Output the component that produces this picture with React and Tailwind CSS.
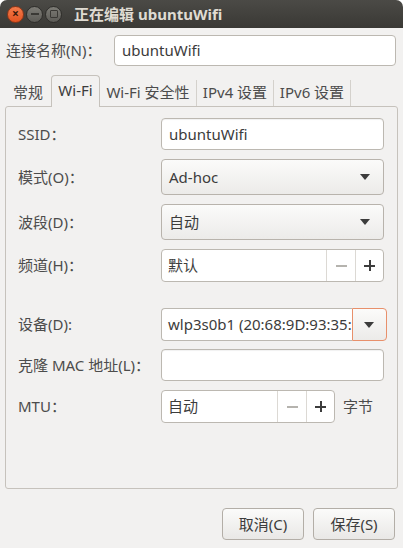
import React from 'react';

const font = { fontFamily: '"Noto Sans", "Noto Sans CJK SC", sans-serif' };

function Arrow() {
  return (
    <svg width="10" height="6" viewBox="0 0 10 6" className="shrink-0">
      <path d="M0 0 L10 0 L5 6 Z" fill="#3c3c3c" />
    </svg>
  );
}

function Entry({ value, h = 'h-[32px]' }) {
  return (
    <div className={`${h} w-full bg-white border border-[#bcb8b1] rounded-[4px] flex items-center px-[7px] text-[#3c3c3c] shadow-[inset_0_1px_1px_rgba(0,0,0,0.06)]`}>
      {value}
    </div>
  );
}

function Combo({ value }) {
  return (
    <div className="h-[36px] w-full bg-gradient-to-b from-[#fbfbfa] to-[#ecebe9] border border-[#b8b3ac] rounded-[4px] flex items-center justify-between pl-[7px] pr-[13px] text-[#3c3c3c]">
      <span>{value}</span>
      <Arrow />
    </div>
  );
}

function Spin({ value, w = 'w-full' }) {
  return (
    <div className={`h-[33px] ${w} bg-white border border-[#bcb8b1] rounded-[4px] flex items-stretch text-[#3c3c3c] overflow-hidden`}>
      <div className="flex-1 flex items-center px-[6px]">{value}</div>
      <div className="w-[29px] border-l border-[#dcd9d4] flex items-center justify-center">
        <div className="w-[11px] h-[2px] bg-[#b5b3ae]" />
      </div>
      <div className="w-[28px] border-l border-[#dcd9d4] flex items-center justify-center relative">
        <div className="w-[11px] h-[2px] bg-[#3c3c3c]" />
        <div className="absolute w-[2px] h-[11px] bg-[#3c3c3c]" />
      </div>
    </div>
  );
}

function Row({ label, children, className = '' }) {
  return (
    <div className={`flex items-center ${className}`}>
      <div className="w-[143px] shrink-0 text-[#4c4c4c]">{label}</div>
      <div className="flex-1 flex items-center">{children}</div>
    </div>
  );
}

const tabs = [
  { t: '常规', w: 'w-[46px]' },
  { t: 'Wi-Fi', w: 'w-[49px]' },
  { t: 'Wi-Fi 安全性', w: 'w-[97px]' },
  { t: 'IPv4 设置', w: 'w-[77px]' },
  { t: 'IPv6 设置', w: 'w-[77px]' },
];

export default function App() {
  return (
    <div className="w-[403px] h-[548px] bg-[#f2f1f0] flex flex-col overflow-hidden text-[15px] rounded-t-[7px]" style={font}>
      <div className="h-[28px] shrink-0 bg-gradient-to-b from-[#4b4a46] to-[#3a3935] flex items-center pl-[7px]">
        <div className="w-[17px] h-[17px] rounded-full bg-gradient-to-b from-[#f37a4a] to-[#e3531f] border border-[#8f3718] flex items-center justify-center text-[#3b1a0c] text-[12px] font-bold leading-none">×</div>
        <div className="ml-[2px] w-[17px] h-[17px] rounded-full bg-gradient-to-b from-[#7d7c76] to-[#5c5b56] border border-[#2f2e2b] flex items-center justify-center">
          <div className="w-[8px] h-[2px] bg-[#3a3935]" />
        </div>
        <div className="ml-[2px] w-[17px] h-[17px] rounded-full bg-gradient-to-b from-[#7d7c76] to-[#5c5b56] border border-[#2f2e2b] flex items-center justify-center">
          <div className="w-[8px] h-[8px] border-[1.5px] border-[#3a3935] rounded-[1px]" />
        </div>
        <span className="ml-[12px] text-[#dfdbd2] font-bold">正在编辑 ubuntuWifi</span>
      </div>

      <div className="flex-1 flex flex-col px-[5px] pt-[7px]">
        <div className="flex items-center h-[31px]">
          <div className="w-[109px] pl-[1px] text-[#4c4c4c]">连接名称(N)：</div>
          <div className="flex-1 pr-[2px]">
            <div className="h-[31px] bg-white border border-[#bcb8b1] rounded-[4px] flex items-center px-[7px] text-[#3c3c3c]">ubuntuWifi</div>
          </div>
        </div>

        <div className="mt-[9px] h-[31px] flex items-end relative z-10">
          {tabs.map((tab, i) =>
            i === 1 ? (
              <div key={tab.t} className={`${tab.w} h-[32px] -mb-px pb-[3px] bg-[#f2f1f0] border border-b-0 border-[#c6c2bc] rounded-t-[4px] text-[#3c3c3c] flex items-center justify-center whitespace-nowrap`}>
                {tab.t}
              </div>
            ) : (
              <div key={tab.t} className={`${tab.w} h-[26px] pb-[2px] flex items-center justify-center whitespace-nowrap text-[#4c4c4c] ${i === 0 ? '' : 'border-r border-[#d4d1cc]'}`}>
                {tab.t}
              </div>
            )
          )}
        </div>

        <div className="h-[383px] border border-[#c6c2bc] rounded-[3px] flex flex-col pl-[12px] pr-[13px] pt-[11px]">
          <Row label="SSID：">
            <Entry value="ubuntuWifi" />
          </Row>
          <Row label="模式(O)：" className="mt-[9px]">
            <Combo value="Ad-hoc" />
          </Row>
          <Row label="波段(D)：" className="mt-[9px]">
            <Combo value="自动" />
          </Row>
          <Row label="频道(H)：" className="mt-[9px]">
            <Spin value="默认" />
          </Row>
          <Row label="设备(D):" className="mt-[26px]">
            <div className="h-[33px] w-full flex items-stretch text-[#3c3c3c]">
              <div className="flex-1 bg-white border border-r-0 border-[#bcb8b1] rounded-l-[4px] flex items-center pl-[6px] overflow-hidden whitespace-nowrap">
                wlp3s0b1 (20:68:9D:93:35:
              </div>
              <div className="w-[35px] bg-gradient-to-b from-[#fbfbfa] to-[#ecebe9] border border-[#e8906b] rounded-r-[4px] flex items-center justify-center">
                <Arrow />
              </div>
            </div>
          </Row>
          <Row label="克隆 MAC 地址(L)：" className="mt-[8px]">
            <Entry value="" />
          </Row>
          <Row label="MTU：" className="mt-[9px]">
            <Spin value="自动" w="w-[174px]" />
            <span className="ml-[8px] text-[#4c4c4c]">字节</span>
          </Row>
        </div>

        <div className="flex justify-end gap-[9px] pt-[19px] pr-[3px]">
          <div className="w-[82px] h-[32px] bg-gradient-to-b from-[#fbfbfa] to-[#e9e8e6] border border-[#b3aea7] rounded-[4px] flex items-center justify-center text-[#3c3c3c]">取消(C)</div>
          <div className="w-[82px] h-[32px] bg-gradient-to-b from-[#fbfbfa] to-[#e9e8e6] border border-[#b3aea7] rounded-[4px] flex items-center justify-center text-[#3c3c3c]">保存(S)</div>
        </div>
      </div>
    </div>
  );
}
